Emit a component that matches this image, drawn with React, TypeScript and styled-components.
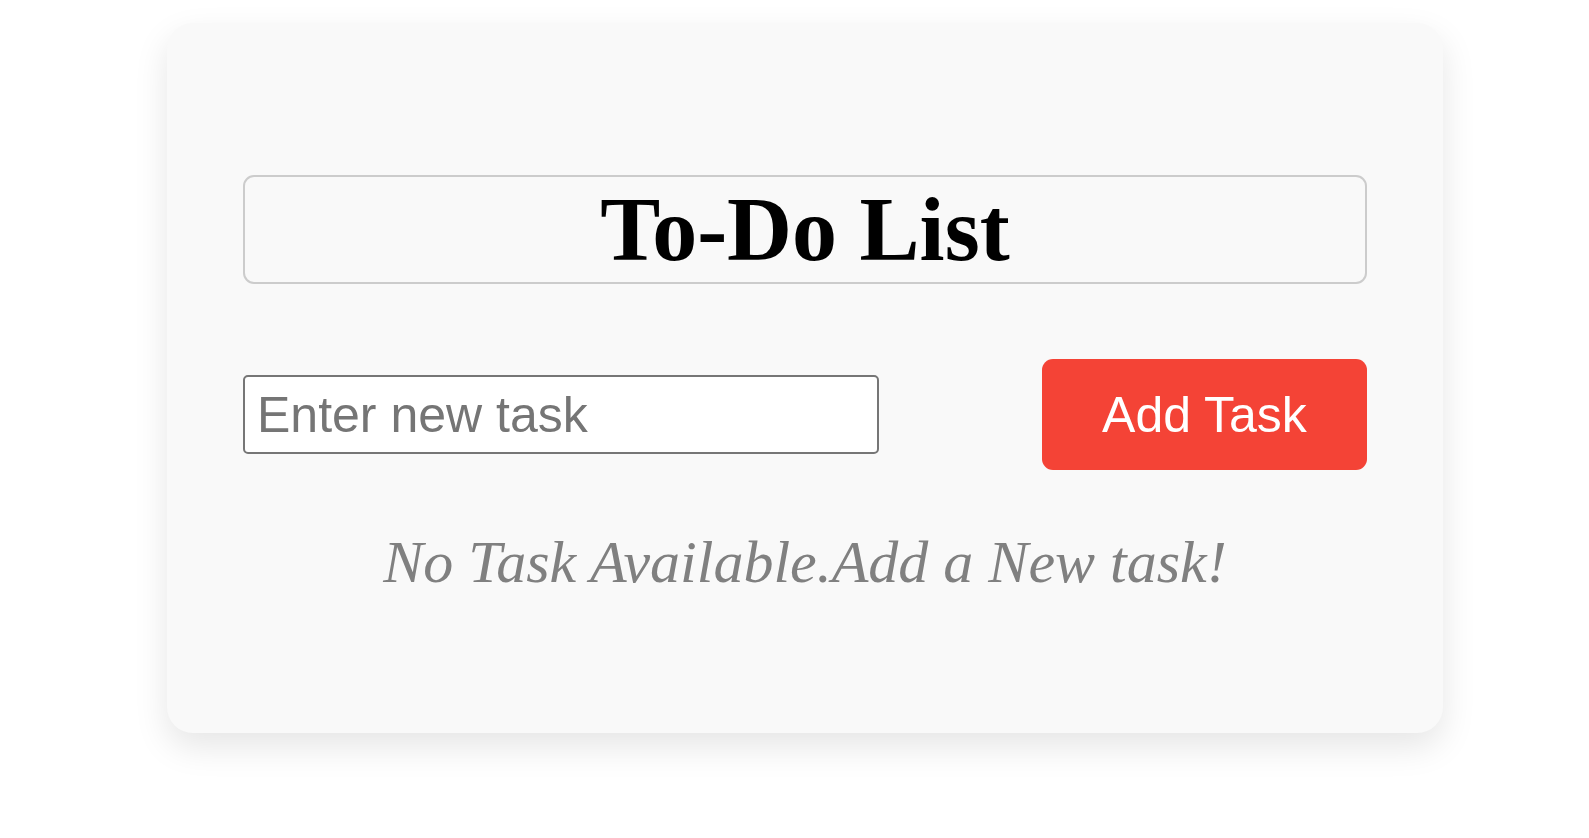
import React, { useState } from "react";
import styled, { createGlobalStyle } from "styled-components";

const GlobalStyle = createGlobalStyle`
  html, body {
    margin: 0;
    padding: 0;
    background: #ffffff;
  }
  body {
    font-family: "Liberation Serif", "Times New Roman", serif;
  }
`;

const Page = styled.div`
  display: flex;
  align-items: flex-start;
  padding: 23px 0 0 167px;
  min-height: 838px;
  box-sizing: border-box;
`;

const Card = styled.div`
  width: 1276px;
  box-sizing: border-box;
  padding: 152px 76px 136px;
  background: #f9f9f9;
  border-radius: 26px;
  box-shadow: 0 14px 34px rgba(0, 0, 0, 0.1);
  display: flex;
  flex-direction: column;
`;

const Title = styled.h1`
  margin: 0;
  padding: 1px 0;
  border: 2px solid #cccccc;
  border-radius: 11px;
  text-align: center;
  font-family: "Liberation Serif", "Times New Roman", serif;
  font-weight: 700;
  font-size: 90px;
  line-height: normal;
  color: #000000;
`;

const InputRow = styled.div`
  margin-top: 75px;
  display: flex;
  align-items: center;
  justify-content: space-between;
`;

const TaskInput = styled.input`
  width: 636px;
  height: 79px;
  box-sizing: border-box;
  padding: 0 12px;
  border: 2px solid #767676;
  border-radius: 5px;
  background: #ffffff;
  font-family: "Liberation Sans", Arial, sans-serif;
  font-size: 50px;
  color: #000;
  outline: none;

  &::placeholder {
    color: #757575;
  }
`;

const AddButton = styled.button`
  width: 325px;
  height: 111px;
  border: none;
  border-radius: 11px;
  background: #f44336;
  color: #ffffff;
  font-family: "Liberation Sans", Arial, sans-serif;
  font-size: 50px;
  cursor: pointer;
`;

const EmptyText = styled.p`
  margin: 58px 0 0;
  text-align: center;
  font-family: "Liberation Serif", "Times New Roman", serif;
  font-style: italic;
  font-size: 60px;
  line-height: normal;
  color: #808080;
`;

export default function App() {
  const [task, setTask] = useState("");
  return (
    <>
      <GlobalStyle />
      <Page>
        <Card>
          <Title>To-Do List</Title>
          <InputRow>
            <TaskInput
              type="text"
              placeholder="Enter new task"
              value={task}
              onChange={(e) => setTask(e.target.value)}
            />
            <AddButton type="button">Add Task</AddButton>
          </InputRow>
          <EmptyText>No Task Available.Add a New task!</EmptyText>
        </Card>
      </Page>
    </>
  );
}
